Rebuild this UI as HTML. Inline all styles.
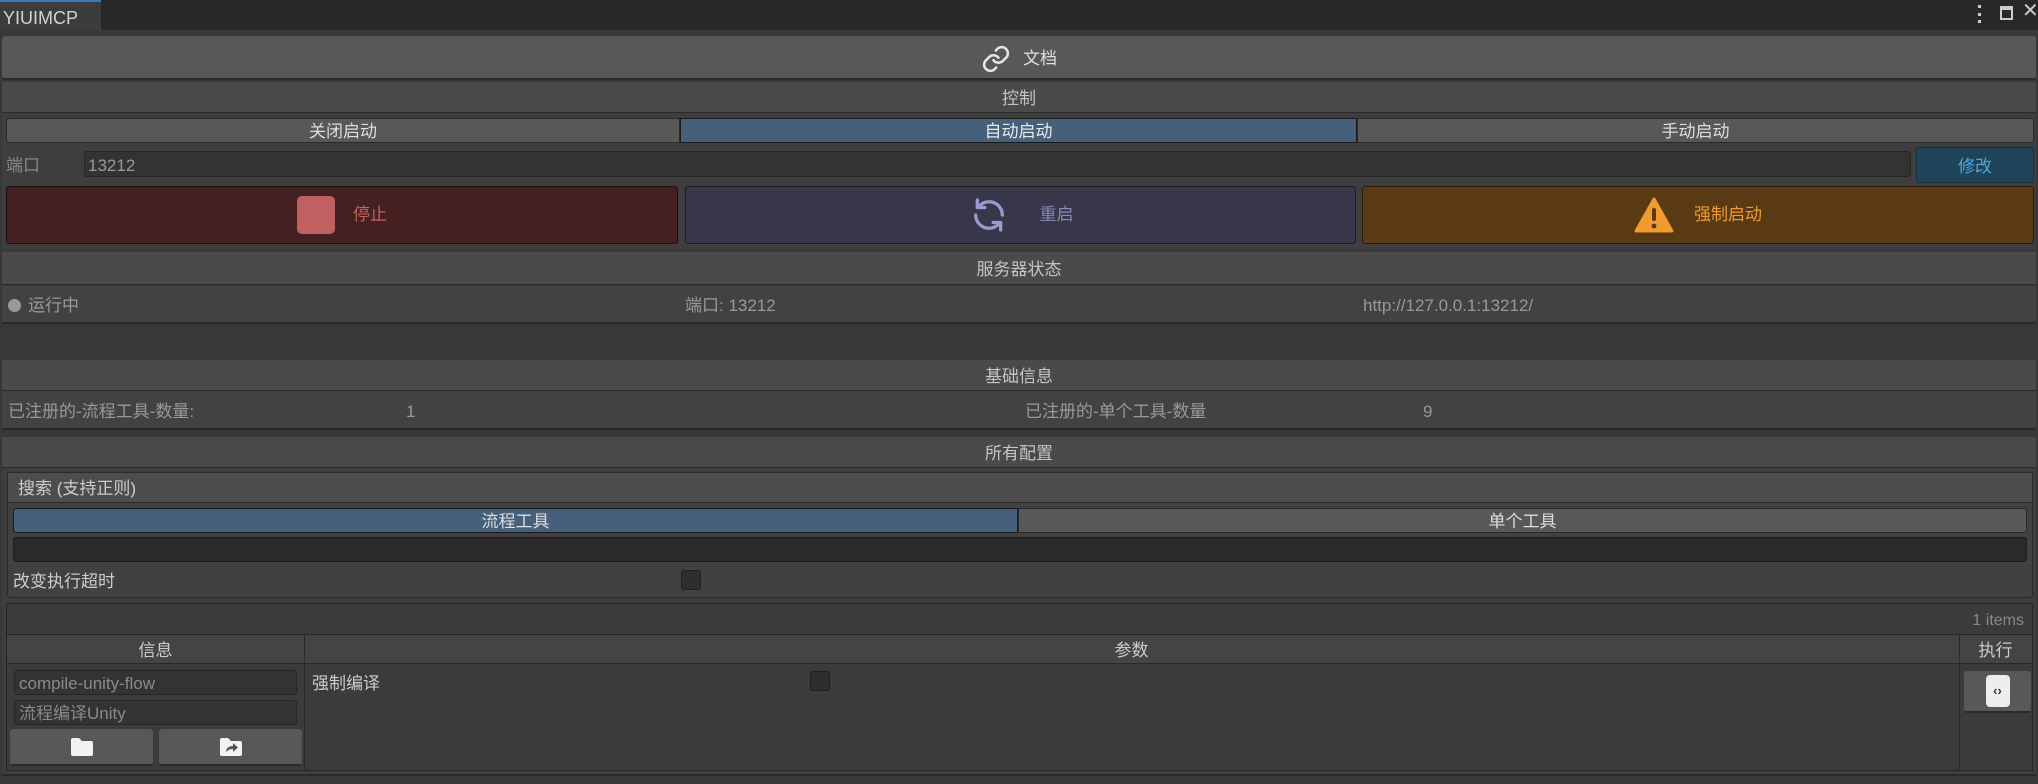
<!DOCTYPE html>
<html><head><meta charset="utf-8"><style>
*{box-sizing:border-box;margin:0;padding:0}
body{width:2038px;height:784px;background:#383838;font-family:"Liberation Sans","Noto Sans CJK SC",sans-serif;font-size:17px;line-height:20px;color:#c4c4c4;position:relative;overflow:hidden}
.a{position:absolute}
.c{display:flex;align-items:center;justify-content:center;padding-top:3px}
.l{display:flex;align-items:center;padding-top:3px}
</style></head><body>
<div class="a" style="left:0;top:0;width:2038px;height:30px;background:#282828"></div>
<div class="a l" style="left:0;top:0;width:101px;height:30px;background:#3c3c3c;border-top:2px solid #3a79bb;padding-left:3px;color:#d2d2d2;font-size:18px">YIUIMCP</div>
<div class="a" style="left:1978px;top:5px;width:4px;height:18px;display:flex;flex-direction:column;justify-content:space-between"><i style="display:block;width:3px;height:3px;background:#ccc"></i><i style="display:block;width:3px;height:3px;background:#ccc"></i><i style="display:block;width:3px;height:3px;background:#ccc"></i></div>
<div class="a" style="left:2000px;top:6px;width:13px;height:14px;border:2px solid #ccc;border-top-width:4px"></div>
<div class="a" style="left:2022px;top:1px;color:#ccc;font-size:20px">✕</div>

<div class="a c" style="left:2px;top:36px;width:2034px;height:44px;background:#585858;border-radius:3px;border-bottom:2px solid #2a2a2a;color:#e0e0e0">
<svg width="30" height="30" viewBox="0 0 24 24" fill="none" stroke="#e6e6e6" stroke-width="2" stroke-linecap="round"><path d="M10 13a5 5 0 0 0 7.5.5l3-3a5 5 0 0 0-7-7l-1.7 1.7"/><path d="M14 11a5 5 0 0 0-7.5-.5l-3 3a5 5 0 0 0 7 7l1.7-1.7"/></svg><span style="margin-left:12px">文档</span></div>

<div class="a c" style="left:2px;top:82px;width:2034px;height:31px;background:#4a4a4a;border-bottom:1px solid #2a2a2a">控制</div>
<div class="a" style="left:2px;top:113px;width:2034px;height:136px;background:#3e3e3e"></div>
<div class="a c" style="left:6px;top:118px;width:674px;height:25px;background:#585858;border:1px solid #2a2a2a;border-radius:3px 0 0 3px;color:#ddd">关闭启动</div>
<div class="a c" style="left:680px;top:118px;width:677px;height:25px;background:#46607c;border:1px solid #1a1a1a;color:#e8e8e8">自动启动</div>
<div class="a c" style="left:1357px;top:118px;width:677px;height:25px;background:#585858;border:1px solid #2a2a2a;border-radius:0 3px 3px 0;color:#ddd">手动启动</div>
<div class="a l" style="left:6px;top:151px;height:26px;color:#888">端口</div>
<div class="a l" style="left:84px;top:151px;width:1827px;height:26px;background:#333;border:1px solid #262626;border-radius:3px;padding-left:3px;color:#999">13212</div>
<div class="a c" style="left:1916px;top:147px;width:118px;height:36px;background:#1f4459;border:1px solid #15303f;border-radius:3px;color:#4ea6dc">修改</div>
<div class="a c" style="left:6px;top:186px;width:672px;height:58px;background:#452021;border:1px solid #1e1010;border-radius:3px;color:#c86060;padding-top:0"><i style="display:block;width:38px;height:38px;background:#c06060;border-radius:5px;margin-right:18px"></i>停止</div>
<div class="a c" style="left:685px;top:186px;width:671px;height:58px;background:#373749;border:1px solid #1c1c28;border-radius:3px;color:#8888b8;padding-top:0">
<svg width="42" height="40" viewBox="0 0 24 24" fill="none" stroke="#9a9ad0" stroke-width="2" stroke-linecap="round" stroke-linejoin="round" style="margin-right:30px"><path d="M20 12a8 8 0 0 0-14.5-4.6"/><path d="M5 3v4.5h4.5"/><path d="M4 12a8 8 0 0 0 14.5 4.6"/><path d="M19 21v-4.5h-4.5"/></svg>重启</div>
<div class="a c" style="left:1362px;top:186px;width:672px;height:58px;background:#593a14;border:1px solid #2a1a08;border-radius:3px;color:#f09a30;padding-top:0">
<svg width="40" height="36" viewBox="0 0 40 36" style="margin-right:20px"><path d="M20 2L38 34H2Z" fill="#f09a30" stroke="#f09a30" stroke-width="3" stroke-linejoin="round"/><rect x="18" y="11" width="4" height="13" rx="2" fill="#593a14"/><circle cx="20" cy="29" r="2.4" fill="#593a14"/></svg>强制启动</div>

<div class="a c" style="left:2px;top:252px;width:2034px;height:33px;background:#4a4a4a;border-bottom:1px solid #2a2a2a">服务器状态</div>
<div class="a" style="left:2px;top:286px;width:2034px;height:38px;background:#424242;border-bottom:2px solid #2a2a2a"></div>
<i class="a" style="left:8px;top:299px;width:13px;height:13px;border-radius:50%;background:#999"></i>
<div class="a l" style="left:28px;top:286px;height:36px;color:#999">运行中</div>
<div class="a l" style="left:685px;top:286px;height:36px;color:#999">端口: 13212</div>
<div class="a l" style="left:1363px;top:286px;height:36px;color:#999">http://127.0.0.1:13212/</div>

<div class="a c" style="left:2px;top:360px;width:2034px;height:31px;background:#4a4a4a;border-bottom:1px solid #2a2a2a">基础信息</div>
<div class="a" style="left:2px;top:391px;width:2034px;height:39px;background:#424242;border-bottom:2px solid #2a2a2a"></div>
<div class="a l" style="left:8px;top:392px;height:36px;color:#999">已注册的-流程工具-数量:</div>
<div class="a l" style="left:406px;top:392px;height:36px;color:#999">1</div>
<div class="a l" style="left:1025px;top:392px;height:36px;color:#999">已注册的-单个工具-数量</div>
<div class="a l" style="left:1423px;top:392px;height:36px;color:#999">9</div>

<div class="a c" style="left:2px;top:437px;width:2034px;height:31px;background:#4a4a4a;border-bottom:1px solid #2a2a2a">所有配置</div>
<div class="a" style="left:2px;top:468px;width:2034px;height:308px;background:#3e3e3e;border-bottom:2px solid #2a2a2a"></div>
<div class="a" style="left:7px;top:472px;width:2026px;height:126px;background:#414141;border:1px solid #2a2a2a;border-radius:3px"></div>
<div class="a l" style="left:8px;top:473px;width:2024px;height:30px;background:#4d4d4d;border-bottom:1px solid #2a2a2a;padding-left:10px;color:#ccc">搜索 (支持正则)</div>
<div class="a c" style="left:13px;top:508px;width:1005px;height:25px;background:#46607c;border:1px solid #1a1a1a;border-radius:3px 0 0 3px;color:#ddd">流程工具</div>
<div class="a c" style="left:1018px;top:508px;width:1009px;height:25px;background:#585858;border:1px solid #2a2a2a;border-radius:0 3px 3px 0;color:#ddd">单个工具</div>
<div class="a" style="left:13px;top:537px;width:2014px;height:25px;background:#2a2a2a;border:1px solid #1f1f1f;border-radius:3px"></div>
<div class="a l" style="left:13px;top:567px;height:26px;color:#ccc">改变执行超时</div>
<div class="a" style="left:681px;top:570px;width:20px;height:20px;background:#2e2e2e;border:1px solid #1f1f1f;border-radius:3px"></div>

<div class="a" style="left:6px;top:603px;width:2027px;height:168px;background:#3b3b3b;border:1px solid #282828"></div>
<div class="a l" style="right:14px;top:605px;height:28px;color:#888;font-size:16px">1 items</div>
<div class="a" style="left:7px;top:634px;width:2025px;height:30px;background:#444;border-top:1px solid #282828;border-bottom:1px solid #282828"></div>
<div class="a c" style="left:7px;top:635px;width:297px;height:29px;color:#ccc">信息</div>
<div class="a c" style="left:304px;top:635px;width:1655px;height:29px;color:#ccc">参数</div>
<div class="a c" style="left:1959px;top:635px;width:73px;height:29px;color:#ccc">执行</div>
<div class="a" style="left:304px;top:634px;width:1px;height:136px;background:#2a2a2a"></div>
<div class="a" style="left:1959px;top:634px;width:1px;height:136px;background:#2a2a2a"></div>
<div class="a l" style="left:14px;top:670px;width:283px;height:25px;background:#333;border:1px solid #262626;border-radius:3px;padding-left:4px;color:#8a8a8a">compile-unity-flow</div>
<div class="a l" style="left:14px;top:700px;width:283px;height:25px;background:#333;border:1px solid #262626;border-radius:3px;padding-left:4px;color:#8a8a8a">流程编译Unity</div>
<div class="a c" style="left:10px;top:729px;width:143px;height:37px;background:#585858;border-bottom:2px solid #2a2a2a;border-radius:3px;padding-top:0"><svg width="26" height="22" viewBox="0 0 26 22"><path d="M2 4a2 2 0 0 1 2-2h6l3 3h9a2 2 0 0 1 2 2v11a2 2 0 0 1-2 2H4a2 2 0 0 1-2-2Z" fill="#f2f2f2"/></svg></div>
<div class="a c" style="left:159px;top:729px;width:143px;height:37px;background:#585858;border-bottom:2px solid #2a2a2a;border-radius:3px;padding-top:0"><svg width="26" height="22" viewBox="0 0 26 22"><path d="M2 4a2 2 0 0 1 2-2h6l3 3h9a2 2 0 0 1 2 2v11a2 2 0 0 1-2 2H4a2 2 0 0 1-2-2Z" fill="#f2f2f2"/><path d="M8 16c0-4 3-6 7-6V7l5 4.5-5 4.5v-3c-3 0-5 1-7 3Z" fill="#555"/></svg></div>
<div class="a l" style="left:312px;top:670px;height:24px;color:#ccc">强制编译</div>
<div class="a" style="left:810px;top:671px;width:20px;height:20px;background:#2e2e2e;border:1px solid #1f1f1f;border-radius:3px"></div>
<div class="a c" style="left:1964px;top:671px;width:67px;height:42px;background:#585858;border-bottom:2px solid #2a2a2a;border-radius:3px;padding-top:0"><div class="c" style="width:24px;height:32px;background:#eee;border-radius:4px;color:#333;font-size:13px;font-weight:bold;padding-top:0">‹›</div></div>
</body></html>
